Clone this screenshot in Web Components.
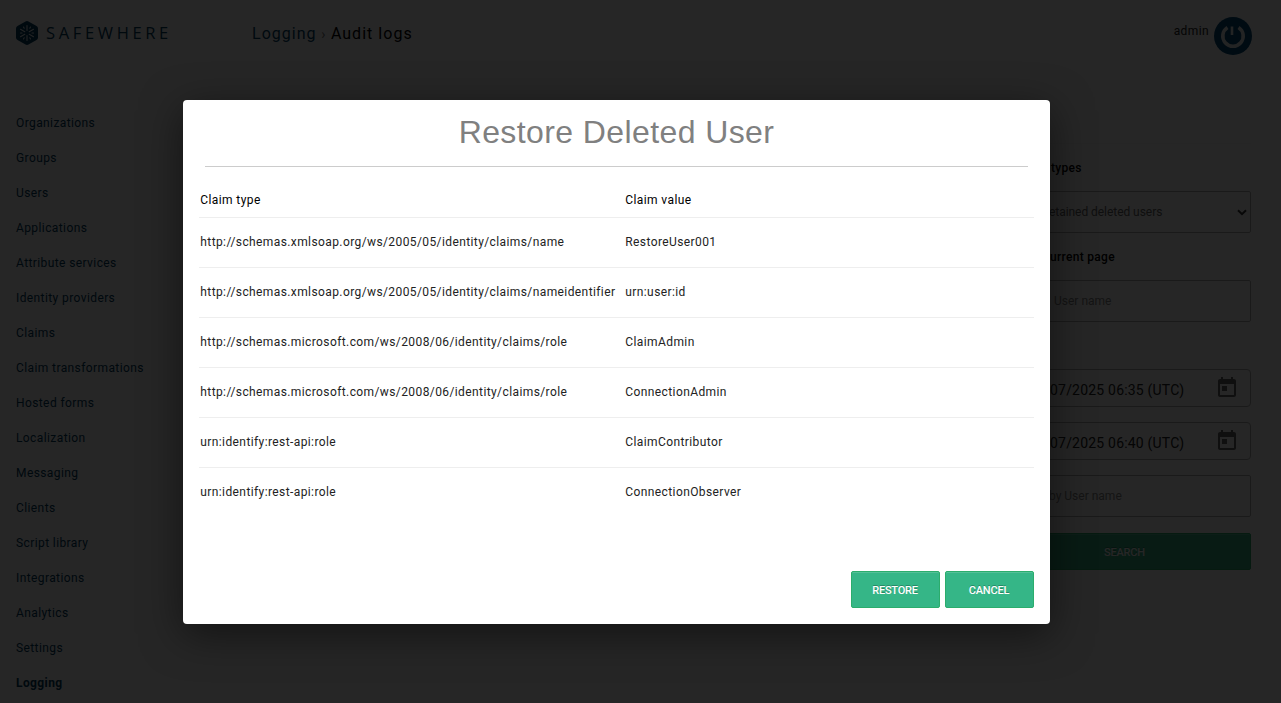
<!DOCTYPE html>
<html lang="en">
<head>
<meta charset="utf-8">
<title>Audit logs</title>
<style>
    body {
        margin: 0;
        height: 703px;
        overflow: hidden;
        background: #fff;
        font: 12px/16px Roboto, sans-serif;
        letter-spacing: 0.4px;
        color: #000;
    }
</style>
</head>
<body>
<audit-page>
    <app-header slot="header" user="admin"></app-header>
    <side-menu slot="menu" active="Logging"></side-menu>
    <search-panel slot="search"></search-panel>
</audit-page>
<modal-dialog heading="Restore Deleted User">
    <claim-table></claim-table>
    <action-button slot="actions">RESTORE</action-button>
    <action-button slot="actions">CANCEL</action-button>
</modal-dialog>

<script>
class BaseElement extends HTMLElement {
    constructor() {
        super();
        this.attachShadow({mode: 'open'});
    }

    connectedCallback() {
        this.shadowRoot.innerHTML = this.render();
    }
}

class AuditPage extends BaseElement {
    render() {
        return `
            <style>
                :host { display: flex; flex-direction: column; height: 703px; }
                main { display: flex; justify-content: space-between; padding: 0 30px 0 16px; }
            </style>
            <slot name="header"></slot>
            <main>
                <slot name="menu"></slot>
                <slot name="search"></slot>
            </main>
        `;
    }
}

class AppLogo extends BaseElement {
    render() {
        return `
            <style>
                :host { display: flex; align-items: center; gap: 8px; color: #003c60; }
                span { font: 16.5px/24px "Open Sans", sans-serif; letter-spacing: 3.65px; }
            </style>
            <svg width="22" height="24" viewBox="0 0 22 24">
                <path d="M9.5 .5Q11-.3 12.500 .5L20.500 5Q22 5.900 22 7.500V16.500Q22 18.100 20.500 19L12.500 23.500Q11 24.300 9.500 23.500L1.500 19Q0 18.100 0 16.500V7.500Q0 5.900 1.500 5Z" fill="currentColor"/>
                <g stroke="#e4eaee" stroke-width="1.100" stroke-linecap="round">
                    <path d="M11 4.500V9.500M11 14.500V19.500M4.500 8.300L8.800 10.700M13.200 13.300L17.500 15.700M4.500 15.700L8.800 13.300M13.200 10.700L17.500 8.300"/>
                    <path d="M7.500 6L8.200 7.200M13.800 16.800L14.500 18M14.500 6L13.800 7.200M8.200 16.800L7.500 18M4.500 12H6M16 12H17.500"/>
                </g>
            </svg>
            <span>SAFEWHERE</span>
        `;
    }
}

class AppHeader extends BaseElement {
    render() {
        return `
            <style>
                :host { display: flex; align-items: flex-start; height: 106px; box-sizing: border-box; padding: 0 29px 0 16px; }
                app-logo { width: 236px; margin-top: 21px; }
                nav { flex: 1; margin-top: 22px; font-size: 16px; line-height: 24px; letter-spacing: 1.03px; white-space: pre; }
                nav a { color: #004268; }
                nav i { color: #777; font-style: normal; font-size: 14px; }
                .user { margin: 23px 5px 0 0; color: #222; }
                svg { margin-top: 17px; }
            </style>
            <app-logo></app-logo>
            <nav><a>Logging</a><i> › </i>Audit logs</nav>
            <span class="user">${this.getAttribute('user')}</span>
            <svg width="38" height="38" viewBox="0 0 38 38" fill="none" stroke="#e8edf0">
                <circle cx="19" cy="19" r="19" fill="#004a77" stroke="none"/>
                <path d="M13.500 10.500A10.200 10.200 0 1 0 24.500 10.500" stroke-width="3.600"/>
                <path d="M18 9.500V18" stroke-width="2.600"/>
            </svg>
        `;
    }
}

class SideMenu extends BaseElement {
    #items = [
        'Organizations', 'Groups', 'Users', 'Applications', 'Attribute services',
        'Identity providers', 'Claims', 'Claim transformations', 'Hosted forms',
        'Localization', 'Messaging', 'Clients', 'Script library', 'Integrations',
        'Analytics', 'Settings', 'Logging'
    ];

    render() {
        const active = this.getAttribute('active');
        return `
            <style>
                :host { display: flex; flex-direction: column; width: 150px; color: #003c60; }
                a { line-height: 35px; white-space: nowrap; }
                .active { font-weight: 700; }
            </style>
            ${this.#items.map((item) => `<a class="${item === active ? 'active' : ''}">${item}</a>`).join('')}
        `;
    }
}

class FormField extends BaseElement {
    #icons = {
        select: '<svg width="10" height="7" viewBox="0 0 10 7"><path d="M1 1.200L5 5.200L9 1.200" fill="none" stroke="#333" stroke-width="2"/></svg>',
        date: '<svg width="24" height="24" viewBox="0 0 24 24"><path fill="#666" d="M19 3h-1V1h-2v2H8V1H6v2H5c-1.110 0-1.990.9-1.990 2L3 19c0 1.100.89 2 2 2h14c1.100 0 2-.9 2-2V5c0-1.100-.9-2-2-2zm0 16H5V8h14v11zM7 10h5v5H7z"/></svg>'
    };

    render() {
        const type = this.getAttribute('type');
        return `
            <style>
                :host { display: flex; align-items: center; justify-content: space-between; box-sizing: border-box; height: 42px; border: 1px solid #b0b0b0; border-radius: 2px; padding: 0 4px 0 49px; letter-spacing: 0; color: #888; white-space: nowrap; }
                :host([type="select"]) { padding-right: 3px; letter-spacing: -0.05px; color: #666; }
                :host([type="date"]) { height: 38px; border-radius: 4px; padding: 3px 11px 0 50px; font-size: 14px; letter-spacing: 0.2px; color: #222; }
                :host([type="date"]) svg { margin-top: -4px; }
            </style>
            <slot></slot>
            ${this.#icons[type] || ''}
        `;
    }
}

class SearchPanel extends BaseElement {
    render() {
        return `
            <style>
                :host { display: flex; flex-direction: column; width: 252px; margin-top: 37px; border-top: 1px solid #f4f4f4; }
                label { font-weight: 500; letter-spacing: 0.3px; padding-left: 52px; margin: 16px 0 15px; }
                form-field + label { margin-top: 16px; padding-left: 51px; }
                .dates { display: grid; gap: 15px; margin: 47px 0 15px; }
                action-button { margin-top: 16px; }
            </style>
            <label>types</label>
            <form-field type="select">etained deleted users</form-field>
            <label>urrent page</label>
            <form-field><span style="padding-left:5px">User name</span></form-field>
            <div class="dates">
                <form-field type="date">07/2025 06:35 (UTC)</form-field>
                <form-field type="date">07/2025 06:40 (UTC)</form-field>
            </div>
            <form-field>by User name</form-field>
            <action-button>SEARCH</action-button>
        `;
    }
}

class ActionButton extends BaseElement {
    render() {
        return `
            <style>
                :host { display: flex; align-items: center; justify-content: center; box-sizing: border-box; height: 37px; min-width: 89px; padding: 2px 1px 0 0; border: 1px solid #2bad6c; border-radius: 2px; background: #35b687; box-shadow: inset 0 1px 0 rgba(255, 255, 255, .15); color: #fff; font-size: 11px; font-weight: 500; letter-spacing: -0.2px; text-shadow: 0 -1px 0 rgba(0, 0, 0, .25); }
            </style>
            <slot></slot>
        `;
    }
}

class ClaimTable extends BaseElement {
    #claims = [
        ['http://schemas.xmlsoap.org/ws/2005/05/identity/claims/name', 'RestoreUser001'],
        ['http://schemas.xmlsoap.org/ws/2005/05/identity/claims/nameidentifier', 'urn:user:id'],
        ['http://schemas.microsoft.com/ws/2008/06/identity/claims/role', 'ClaimAdmin'],
        ['http://schemas.microsoft.com/ws/2008/06/identity/claims/role', 'ConnectionAdmin'],
        ['urn:identify:rest-api:role', 'ClaimContributor'],
        ['urn:identify:rest-api:role', 'ConnectionObserver']
    ];

    render() {
        return `
            <style>
                :host { display: block; }
                .row { display: grid; grid-template-columns: 425px 1fr; box-sizing: border-box; height: 50px; align-items: center; padding: 0 1px 2px 1.3px; border-bottom: 1px solid #eee; color: #222; }
                .row:last-child { border-color: transparent; }
                .head { height: 37px; padding-top: 2px; padding-bottom: 0; color: #000; }
            </style>
            <div class="row head"><span>Claim type</span><span>Claim value</span></div>
            ${this.#claims.map(([type, value]) => `<div class="row"><span>${type}</span><span>${value}</span></div>`).join('')}
        `;
    }
}

class ModalDialog extends BaseElement {
    render() {
        return `
            <style>
                :host { position: absolute; inset: 0; padding: 100px 0 0 183px; background: rgba(0, 0, 0, .85); }
                section { display: flex; flex-direction: column; box-sizing: border-box; width: 867px; height: 524px; padding: 0 16px 16px; border-radius: 4px; background: #fff; box-shadow: 0 10px 40px rgba(0, 0, 0, .5); }
                h1 { margin: 0 6px 14px; height: 66px; border-bottom: 1px solid #ccc; font: 32px/64px "Liberation Sans", Arial, sans-serif; letter-spacing: 0.4px; color: #808080; text-align: center; }
                footer { display: flex; justify-content: flex-end; gap: 5px; margin-top: auto; }
            </style>
            <section>
                <h1>${this.getAttribute('heading')}</h1>
                <slot></slot>
                <footer><slot name="actions"></slot></footer>
            </section>
        `;
    }
}

customElements.define('app-logo', AppLogo);
customElements.define('app-header', AppHeader);
customElements.define('side-menu', SideMenu);
customElements.define('form-field', FormField);
customElements.define('action-button', ActionButton);
customElements.define('search-panel', SearchPanel);
customElements.define('audit-page', AuditPage);
customElements.define('claim-table', ClaimTable);
customElements.define('modal-dialog', ModalDialog);
</script>
</body>
</html>
